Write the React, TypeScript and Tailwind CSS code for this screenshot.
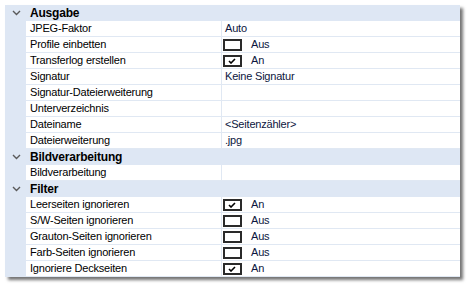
import React from 'react';

type Item = { label: string; value?: string; check?: boolean };
type Group = { title: string; items: Item[] };

const groups: Group[] = [
  {
    title: 'Ausgabe',
    items: [
      { label: 'JPEG-Faktor', value: 'Auto' },
      { label: 'Profile einbetten', check: false },
      { label: 'Transferlog erstellen', check: true },
      { label: 'Signatur', value: 'Keine Signatur' },
      { label: 'Signatur-Dateierweiterung' },
      { label: 'Unterverzeichnis' },
      { label: 'Dateiname', value: '<Seitenzähler>' },
      { label: 'Dateierweiterung', value: '.jpg' },
    ],
  },
  { title: 'Bildverarbeitung', items: [{ label: 'Bildverarbeitung' }] },
  {
    title: 'Filter',
    items: [
      { label: 'Leerseiten ignorieren', check: true },
      { label: 'S/W-Seiten ignorieren', check: false },
      { label: 'Grauton-Seiten ignorieren', check: false },
      { label: 'Farb-Seiten ignorieren', check: false },
      { label: 'Ignoriere Deckseiten', check: true },
    ],
  },
];

function Chevron() {
  return (
    <svg width="9" height="6" viewBox="0 0 9 6" className="block">
      <path d="M1 1 L4.5 4.5 L8 1" fill="none" stroke="#5a5a5a" strokeWidth="1.4" />
    </svg>
  );
}

function CheckBox({ on }: { on: boolean }) {
  return (
    <div className="w-[19px] h-[12px] border-2 border-[#2a2a2a] bg-white flex items-center pl-[3px]">
      {on && (
        <svg width="8" height="6" viewBox="0 0 8 6" className="block">
          <path d="M1 3 L3 5 L7 1" fill="none" stroke="#000" strokeWidth="1.6" />
        </svg>
      )}
    </div>
  );
}

function Row({ item }: { item: Item }) {
  return (
    <div className="flex h-[16px]">
      <div className="w-[21px] bg-[#dee7f4]" />
      <div className="w-[196px] border-b border-r border-[#e0e8f3] pl-[4px] leading-[15px] whitespace-nowrap">
        {item.label}
      </div>
      <div className="flex-1 border-b border-[#e0e8f3] leading-[15px] text-[#0c1640]">
        {item.check !== undefined ? (
          <div className="flex items-center h-[15px] pl-[1px] gap-[9px]">
            <CheckBox on={item.check} />
            <span>{item.check ? 'An' : 'Aus'}</span>
          </div>
        ) : (
          <div className="pl-[3px]">{item.value}</div>
        )}
      </div>
    </div>
  );
}

export default function App() {
  return (
    <div className="w-[469px] h-[288px] bg-white p-[5px] font-['Liberation_Sans',Arial,sans-serif] text-[11px] tracking-[-0.2px] text-black">
      <div className="w-[455px] bg-white shadow-[3px_3px_3px_rgba(0,0,0,0.55)]">
        {groups.map((g) => (
          <div key={g.title}>
            <div className="flex h-[16px] items-center bg-[#dee7f4]">
              <div className="w-[21px] flex justify-center pl-[1px]">
                <Chevron />
              </div>
              <div className="pl-[4px] font-bold text-[12px] leading-[16px]">{g.title}</div>
            </div>
            {g.items.map((it) => (
              <Row key={it.label} item={it} />
            ))}
          </div>
        ))}
      </div>
    </div>
  );
}
